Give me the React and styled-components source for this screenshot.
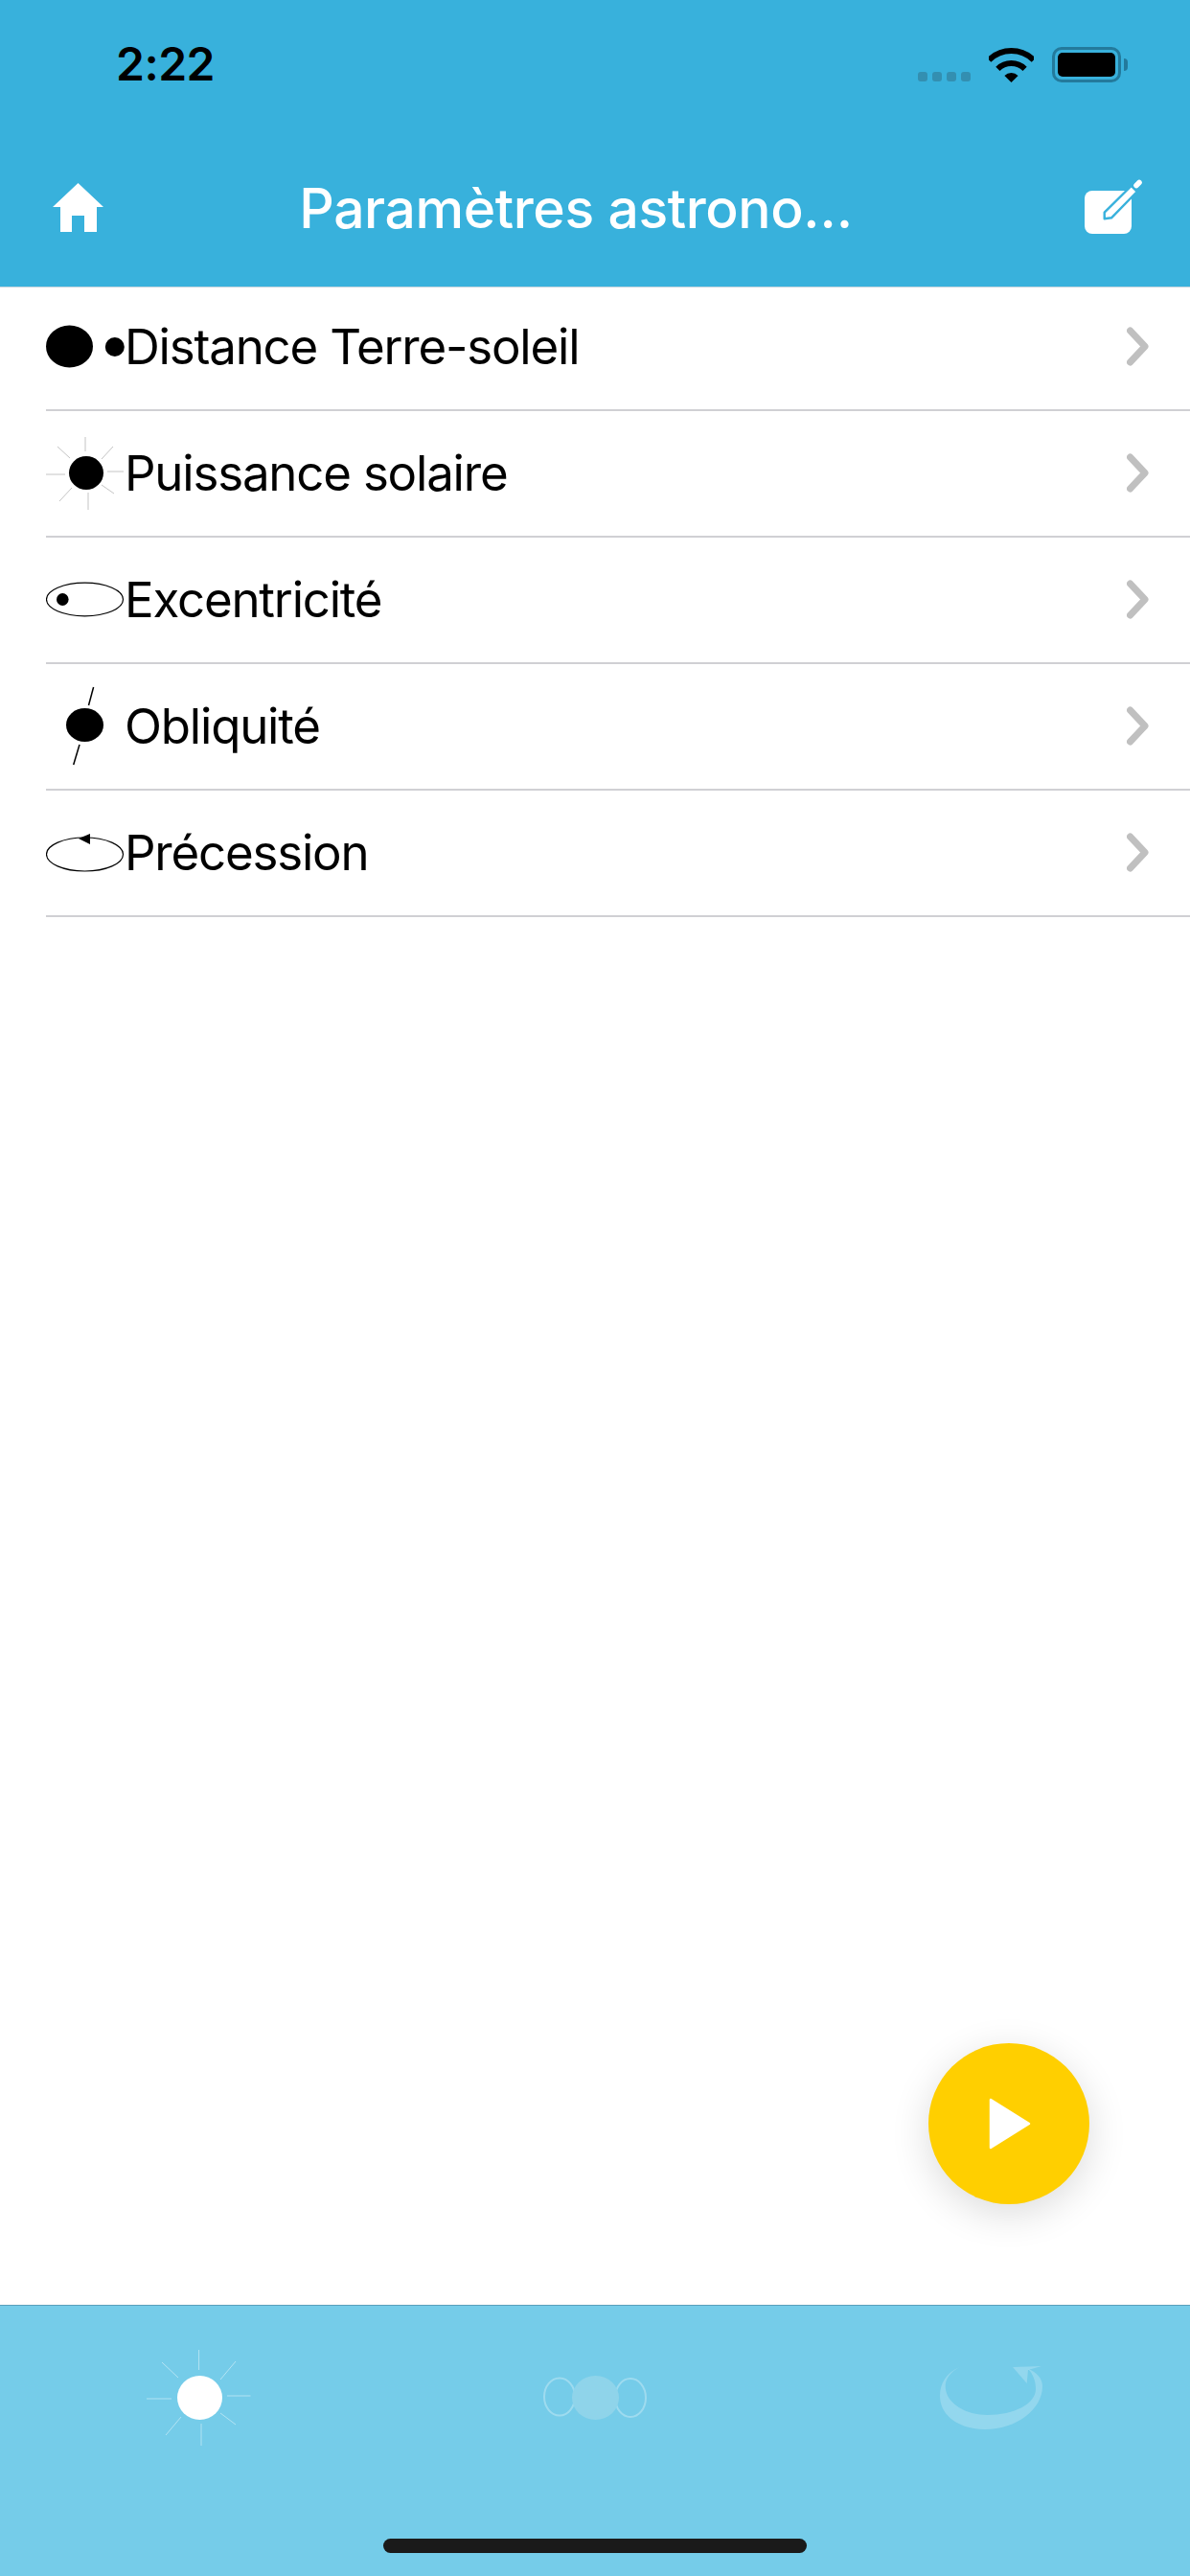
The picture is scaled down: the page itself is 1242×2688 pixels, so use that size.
// App.jsx
import React from 'react';
import styled, { createGlobalStyle } from 'styled-components';

const GlobalStyle = createGlobalStyle`
  html, body {
    margin: 0;
    padding: 0;
    background: #fff;
  }
`;

const Page = styled.div`
  position: relative;
  display: flex;
  flex-direction: column;
  width: 1242px;
  height: 2688px;
  overflow: hidden;
  background: #fff;
  font-family: Inter, "Liberation Sans", sans-serif;
`;

const Header = styled.header`
  position: relative;
  z-index: 1;
  height: 300px;
  box-sizing: border-box;
  background: #38b1dc;
  border-bottom: 1px solid #c5d5de;
`;

const StatusBar = styled.div`
  display: flex;
  justify-content: space-between;
  align-items: flex-end;
  box-sizing: border-box;
  height: 86px;
  padding: 0 65px 0 121px;
`;

const Time = styled.span`
  font-size: 48px;
  font-weight: 600;
  line-height: 36px;
  letter-spacing: -0.5px;
  color: #000;
  margin-bottom: 1px;
`;

const StatusIcons = styled.div`
  display: flex;
  align-items: flex-end;
  gap: 19px;
`;

const Dots = styled.div`
  display: flex;
  gap: 5px;
  margin-bottom: 1px;
`;

const Dot = styled.i`
  width: 10px;
  height: 10px;
  border-radius: 3px;
  background: #338fb1;
`;

const Battery = styled.div`
  display: flex;
  align-items: center;
  gap: 3px;
`;

const BatteryShell = styled.div`
  box-sizing: border-box;
  width: 72px;
  height: 37px;
  padding: 3px;
  border: 3px solid #237a9c;
  border-radius: 10px;
`;

const BatteryFill = styled.div`
  height: 100%;
  border-radius: 5px;
  background: #000;
`;

const BatteryNub = styled.div`
  width: 4px;
  height: 13px;
  border-radius: 0 4px 4px 0;
  background: #237a9c;
`;

const NavBar = styled.nav`
  display: flex;
  align-items: center;
  box-sizing: border-box;
  height: 60px;
  margin-top: 100px;
  padding: 0 50px 0 54px;
`;

const Title = styled.h1`
  flex: 1;
  margin: 0;
  padding: 3px 38px 0 0;
  text-align: center;
  font-size: 57px;
  font-weight: 500;
  line-height: 60px;
  letter-spacing: -0.4px;
  color: #fff;
  white-space: nowrap;
`;

const List = styled.ul`
  margin: -3px 0 0;
  padding: 0;
  list-style: none;
  flex: 1;
`;

const Row = styled.li`
  display: flex;
  align-items: center;
  box-sizing: border-box;
  height: 132px;
  margin-left: 48px;
  padding-right: 43px;
  border-bottom: 2px solid #d0d0d4;
`;

const RowIcon = styled.svg`
  flex: none;
  width: 82px;
  height: 132px;
  margin-top: 2px;
`;

const Label = styled.span`
  flex: 1;
  font-size: 51px;
  line-height: 60px;
  letter-spacing: -1.2px;
  color: #000;
`;

const Fab = styled.button`
  position: absolute;
  right: 105px;
  bottom: 388px;
  display: flex;
  align-items: center;
  justify-content: center;
  width: 168px;
  height: 168px;
  padding: 0 0 0 2px;
  border: 0;
  border-radius: 50%;
  background: #ffcf00;
  box-shadow: 0 10px 40px rgba(0, 0, 0, 0.14);
`;

const TabBar = styled.footer`
  display: flex;
  flex-direction: column;
  box-sizing: border-box;
  height: 283px;
  padding-top: 46px;
  background: #75cce9;
  border-top: 1px solid #5a9fbb;
`;

const Tabs = styled.div`
  display: grid;
  grid-template-columns: repeat(3, 1fr);
  height: 100px;
`;

const Tab = styled.div`
  display: flex;
  justify-content: center;
`;

const HomeIndicator = styled.div`
  align-self: center;
  width: 442px;
  height: 15px;
  margin-top: 97px;
  border-radius: 8px;
  background: #1a1a1a;
`;

const IconPath = ({ children }) => (
  <RowIcon viewBox="0 -2 82 132">{children}</RowIcon>
);

const DistanceIcon = () => (
  <IconPath>
    <ellipse cx="24.5" cy="62.5" rx="24.5" ry="22" />
    <circle cx="71.8" cy="63" r="10" />
  </IconPath>
);

const SolarIcon = () => (
  <IconPath>
    <ellipse cx="42" cy="62.5" rx="18" ry="17.5" />
    <g stroke="#c4c4c4" strokeWidth="1">
      <line x1="41" y1="25" x2="41" y2="40" />
      <line x1="44" y1="83" x2="44" y2="101" />
      <line x1="0" y1="64" x2="20" y2="64" />
      <line x1="64" y1="61" x2="81" y2="61" />
      <line x1="12" y1="35" x2="25" y2="47" />
      <line x1="70" y1="35" x2="58" y2="48" />
      <line x1="14" y1="92" x2="27" y2="78" />
      <line x1="71" y1="84" x2="58" y2="75" />
    </g>
  </IconPath>
);

const EccentricityIcon = () => (
  <IconPath>
    <ellipse cx="40.5" cy="62.5" rx="40" ry="17.3" fill="none" stroke="#000" strokeWidth="1.2" />
    <ellipse cx="17.3" cy="62.5" rx="6.3" ry="6.5" />
  </IconPath>
);

const ObliquityIcon = () => (
  <IconPath>
    <ellipse cx="40.5" cy="61.5" rx="19.5" ry="17.5" />
    <line x1="49.6" y1="22" x2="44.5" y2="41" stroke="#000" strokeWidth="1.5" />
    <line x1="35" y1="82" x2="28.7" y2="103" stroke="#000" strokeWidth="1.5" />
  </IconPath>
);

const PrecessionIcon = () => (
  <IconPath>
    <ellipse cx="40.5" cy="64.5" rx="40" ry="17.5" fill="none" stroke="#000" strokeWidth="1.2" />
    <polygon points="34,48 46,43 46,54" />
  </IconPath>
);

const Chevron = () => (
  <svg width="23" height="42" viewBox="0 0 23 42" fill="none">
    <path d="M3.5 4 L19 20.5 L3.5 37" stroke="#c0c0c0" strokeWidth="7" strokeLinecap="round" strokeLinejoin="round" />
  </svg>
);

const WifiIcon = () => (
  <svg width="47" height="36" viewBox="0 0 47 36" fill="none" stroke="#000" strokeWidth="6">
    <path d="M0.2 12.7 A33 33 0 0 1 46.8 12.7" />
    <path d="M9.4 21.9 A20 20 0 0 1 37.6 21.9" />
    <path d="M23.5 36 L16.4 28.9 A10 10 0 0 1 30.6 28.9 Z" fill="#000" stroke="none" />
  </svg>
);

const HomeIcon = () => (
  <svg width="54" height="51" viewBox="0 0 54 51" fill="#fff">
    <path d="M27.5 0 L54 25 L47 25 L47 51 L34 51 L34 34 L21 34 L21 51 L9 51 L9 25 L1 25 Z" />
  </svg>
);

const EditIcon = () => (
  <svg width="60" height="60" viewBox="0 0 60 60">
    <rect x="0" y="13" width="49" height="45" rx="8" fill="#fff" />
    <path d="M20.7 35.7 L48.7 8 L54.7 14 L28 41.3 L20.7 42.3 Z" fill="#fff" stroke="#38b1dc" strokeWidth="2.4" strokeLinejoin="round" />
    <line x1="54" y1="7.5" x2="57" y2="4.5" stroke="#fff" strokeWidth="5.5" strokeLinecap="round" />
  </svg>
);

const PlayIcon = () => (
  <svg width="44" height="54" viewBox="0 0 44 54" fill="#fff">
    <path d="M2 2 L42 27 L2 52 Z" stroke="#fff" strokeWidth="2.5" strokeLinejoin="round" />
  </svg>
);

const SunTab = () => (
  <svg width="120" height="100" viewBox="0 0 120 100">
    <ellipse cx="61.5" cy="50" rx="23.5" ry="23" fill="#fff" />
    <g stroke="#fff" strokeOpacity="0.45" strokeWidth="1">
      <line x1="60.6" y1="0" x2="60.6" y2="21" />
      <line x1="63" y1="77" x2="63" y2="100" />
      <line x1="6" y1="51" x2="32" y2="51" />
      <line x1="90" y1="48" x2="114.5" y2="48" />
      <line x1="22" y1="13" x2="39" y2="29" />
      <line x1="99" y1="12" x2="83" y2="31" />
      <line x1="26" y1="89" x2="42" y2="70" />
      <line x1="99" y1="78" x2="83" y2="66" />
    </g>
  </svg>
);

const EarthTab = () => (
  <svg width="120" height="100" viewBox="0 0 120 100" fill="none">
    <ellipse cx="23" cy="49" rx="16" ry="19.5" stroke="#fff" strokeOpacity="0.3" strokeWidth="2" />
    <ellipse cx="97" cy="50" rx="16" ry="20" stroke="#fff" strokeOpacity="0.3" strokeWidth="2" />
    <ellipse cx="60.5" cy="50" rx="24.5" ry="23" fill="#8fd4ea" />
  </svg>
);

const RotationTab = () => (
  <svg width="120" height="100" viewBox="0 0 120 100" fill="#fff" fillOpacity="0.22">
    <path d="M26.7 18 C12 24 6 36 6 48 C6 70 28 83 53 83 C86 83 113 62 113 38 C113 30 107 23 98 20 C104 26 106 34 106 41 C106 56 84 68 55 68 C32 68 11.7 55 11.7 38 C11.7 30 17 23 26.7 18 Z" />
    <polygon points="82,18 112,17 98,21 96.7,35" />
  </svg>
);

const rows = [
  { label: 'Distance Terre-soleil', Icon: DistanceIcon },
  { label: 'Puissance solaire', Icon: SolarIcon },
  { label: 'Excentricité', Icon: EccentricityIcon },
  { label: 'Obliquité', Icon: ObliquityIcon },
  { label: 'Précession', Icon: PrecessionIcon },
];

const App = () => {
  return (
    <Page>
      <GlobalStyle />
      <Header>
        <StatusBar>
          <Time>2:22</Time>
          <StatusIcons>
            <Dots>
              <Dot />
              <Dot />
              <Dot />
              <Dot />
            </Dots>
            <WifiIcon />
            <Battery>
              <BatteryShell>
                <BatteryFill />
              </BatteryShell>
              <BatteryNub />
            </Battery>
          </StatusIcons>
        </StatusBar>
        <NavBar>
          <HomeIcon />
          <Title>Paramètres astrono…</Title>
          <EditIcon />
        </NavBar>
      </Header>
      <List>
        {rows.map(({ label, Icon }) => (
          <Row key={label}>
            <Icon />
            <Label>{label}</Label>
            <Chevron />
          </Row>
        ))}
      </List>
      <Fab>
        <PlayIcon />
      </Fab>
      <TabBar>
        <Tabs>
          <Tab><SunTab /></Tab>
          <Tab><EarthTab /></Tab>
          <Tab><RotationTab /></Tab>
        </Tabs>
        <HomeIndicator />
      </TabBar>
    </Page>
  );
};

export default App;
